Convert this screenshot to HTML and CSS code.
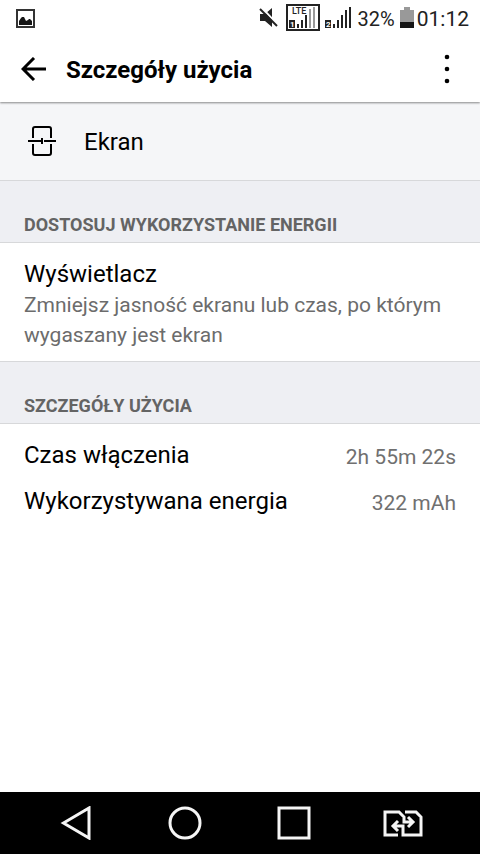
FILE: index.html
```html
<!DOCTYPE html>
<html lang="pl">
<head>
<meta charset="utf-8">
<meta name="viewport" content="width=device-width, initial-scale=1">
<title>Szczegóły użycia</title>
<link rel="stylesheet" href="styles.css">
</head>
<body>
<div class="status">
  <svg class="picture" width="20" height="20" viewBox="0 0 20 20" aria-hidden="true">
    <rect x="1" y="2" width="17" height="17" fill="none" stroke="#333" stroke-width="2"/>
    <path d="M3 17V13L5 10L6 9H8L10 13L12 12L13 11H14L16 13V17Z" fill="#151515"/>
  </svg>
  <svg class="mute" width="20" height="20" viewBox="0 0 20 20" aria-hidden="true">
    <path d="M1 6H6L13 0V19L6 13H1Z" fill="#222"/>
    <path d="M3 0L20 18" stroke="#fff" stroke-width="2"/>
    <path d="M1 1L18 18" stroke="#222" stroke-width="2"/>
  </svg>
  <svg class="sim-one" width="34" height="27" viewBox="0 0 34 27">
    <rect x="1" y="1" width="32" height="25" fill="none" stroke="#222" stroke-width="2"/>
    <path d="M3 16H9V24H3ZM11 20H13V24H11ZM15 16H17V24H15ZM19 11H21V24H19Z" fill="#222"/>
    <path d="M23 5H25V24H23ZM27 3H29V24H27Z" fill="#999"/>
    <text class="network" x="6" y="10">LTE</text>
    <text class="sim-number" x="4" y="23">1</text>
  </svg>
  <svg class="sim-two" width="27" height="22" viewBox="0 0 27 22">
    <path d="M0 13H6V21H0ZM8 17H10V21H8ZM12 13H14V21H12ZM16 8H18V21H16ZM20 3H22V21H20ZM24 0H26V21H24Z" fill="#222"/>
    <text class="sim-number" x="1" y="20">2</text>
  </svg>
  <span class="percent">32%</span>
  <svg class="battery" width="14" height="21" viewBox="0 0 14 21" aria-hidden="true">
    <path d="M4 0H10V3H14V15H0V3H4Z" fill="#999"/>
    <path d="M0 15H14V21H0Z" fill="#151515"/>
  </svg>
  <time class="clock">01:12</time>
</div>
<header class="appbar">
  <button class="icon-button" aria-label="Wstecz">
    <svg width="26" height="24" viewBox="0 0 26 24"><path d="M25 12H2M13 1L2 12L13 23" fill="none" stroke="#000" stroke-width="3"/></svg>
  </button>
  <h1>Szczegóły użycia</h1>
  <button class="icon-button" aria-label="Więcej opcji">
    <svg width="6" height="30" viewBox="0 0 6 30"><circle cx="3" cy="3" r="2.3"/><circle cx="3" cy="15" r="2.3"/><circle cx="3" cy="27" r="2.3"/></svg>
  </button>
</header>
<main>
  <div class="subject">
    <svg width="28" height="30" viewBox="0 0 28 30" aria-hidden="true">
      <path d="M5 12V3Q5 1 7 1H21Q23 1 23 3V12M5 18V27Q5 29 7 29H21Q23 29 23 27V18M0 15H12M16 15H28M12 15H14M14 12V18" fill="none" stroke="#000" stroke-width="2"/>
    </svg>
    <span>Ekran</span>
  </div>
  <h2>DOSTOSUJ WYKORZYSTANIE ENERGII</h2>
  <a class="setting" href="#display">
    <span class="label">Wyświetlacz</span>
    <span class="description">Zmniejsz jasność ekranu lub czas, po którym wygaszany jest ekran</span>
  </a>
  <h2>SZCZEGÓŁY UŻYCIA</h2>
  <dl>
    <div class="row"><dt>Czas włączenia</dt><dd>2h 55m 22s</dd></div>
    <div class="row"><dt>Wykorzystywana energia</dt><dd>322 mAh</dd></div>
  </dl>
</main>
<nav>
  <button aria-label="Wstecz">
    <svg width="32" height="34" viewBox="0 0 32 34"><path d="M3.500 17L29 2V32Z"/></svg>
  </button>
  <button aria-label="Ekran główny">
    <svg width="34" height="34" viewBox="0 0 34 34"><circle cx="17" cy="17" r="15"/></svg>
  </button>
  <button aria-label="Ostatnie aplikacje">
    <svg width="34" height="34" viewBox="0 0 34 34"><rect x="2" y="2" width="30" height="30"/></svg>
  </button>
  <button aria-label="Przełącz kartę SIM">
    <svg width="40" height="34" viewBox="0 0 40 34"><path d="M15 29H2V6H16L21 11V16H30M25 11L30 16L25 21M22 6H33L38 11V29H20V20H10M15 15L10 20L15 25"/></svg>
  </button>
</nav>
</body>
</html>
```

FILE: styles.css
```css
* {
  box-sizing: border-box;
}

body {
  display: flex;
  flex-direction: column;
  min-height: 100vh;
  margin: 0;
  background: #fff;
  color: #000;
  font-family: Roboto, sans-serif;
  font-size: 24px;
  line-height: 30px;
}

svg {
  display: block;
  flex: none;
}

button {
  display: flex;
  align-items: center;
  justify-content: center;
  padding: 0;
  border: 0;
  background: none;
}

h1,
h2,
dl,
dd {
  margin: 0;
}

.status {
  display: flex;
  align-items: center;
  position: relative;
  z-index: 1;
  height: 35px;
  padding: 0 11px 0 16px;
  background: #fff;
  color: #222;
  font-size: 21px;
}

.percent,
.clock {
  padding-top: 2px;
}

.mute {
  margin: 0 7px 0 auto;
}

.sim-one {
  margin-right: 5px;
}

.sim-two {
  margin-right: 6px;
}

.percent {
  margin-right: 5px;
  font-size: 20px;
}

.battery {
  margin-right: 3px;
}

.network {
  fill: #222;
  font-size: 9px;
  font-weight: 500;
}

.sim-number {
  fill: #fff;
  font-size: 8px;
  font-weight: 700;
}

.appbar {
  display: flex;
  align-items: center;
  position: relative;
  height: 67px;
  padding: 0 12px 0 13px;
  box-shadow: 0 1px 2px rgba(0, 0, 0, 0.45);
}

.icon-button {
  width: 42px;
  height: 48px;
}

h1 {
  flex: 1;
  padding: 3px 0 0 11px;
  font-size: 24px;
  font-weight: 700;
}

main {
  flex: 1;
}

.subject {
  display: flex;
  align-items: center;
  gap: 28px;
  height: 79px;
  padding: 0 28px;
  border-bottom: 1px solid #d7d8da;
  background: #f5f6f8;
}

.subject span {
  padding-top: 2px;
}

h2 {
  padding: 34px 24px 7px;
  border-bottom: 1px solid #d7d8da;
  background: #eeeff3;
  color: #646464;
  font-size: 18px;
  font-weight: 700;
  line-height: 20px;
}

.setting {
  display: block;
  padding: 16px 24px 11px;
  border-bottom: 1px solid #d7d8da;
  color: #000;
  text-decoration: none;
}

.label,
.description {
  display: block;
}

.description {
  padding-top: 1px;
  color: #6c6c6c;
  font-size: 21px;
}

dl {
  padding: 8px 24px;
}

.row {
  display: flex;
  align-items: center;
  justify-content: space-between;
  height: 46px;
}

dd {
  padding-top: 4px;
  color: #707070;
  font-size: 21px;
}

nav {
  display: flex;
  justify-content: center;
  height: 62px;
  padding-right: 2px;
  background: #000;
}

nav button {
  width: 109px;
}

nav path,
nav circle,
nav rect {
  fill: none;
  stroke: #f5f5f5;
  stroke-width: 3px;
}
```
